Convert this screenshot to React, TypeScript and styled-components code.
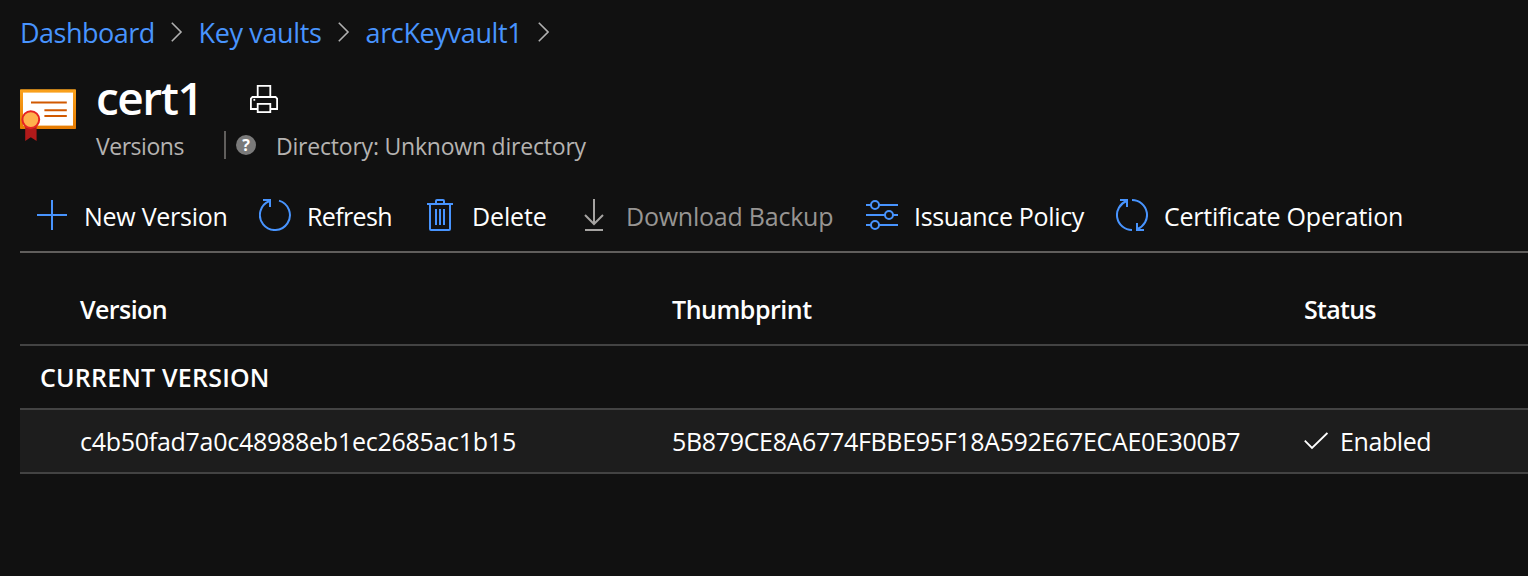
import React from 'react';
import styled, { createGlobalStyle } from 'styled-components';

const GlobalStyle = createGlobalStyle`
  html, body {
    margin: 0;
    background: #111111;
  }
  *, *::before, *::after {
    box-sizing: border-box;
  }
`;

const Page = styled.main`
  display: flex;
  flex-direction: column;
  min-height: 576px;
  padding-left: 20px;
  overflow: hidden;
  background: #111111;
  color: #ffffff;
  font-family: 'Open Sans', 'Noto Sans', sans-serif;
  font-size: 25px;
  line-height: 36px;
  white-space: nowrap;
`;

const Breadcrumb = styled.nav`
  display: flex;
  align-items: center;
  height: 64px;
`;

const Crumb = styled.a<{ $width: number; $tracking: number }>`
  width: ${(p) => p.$width}px;
  padding-top: 2px;
  color: #4894fe;
  font-size: 27px;
  letter-spacing: ${(p) => p.$tracking}px;
  text-decoration: none;
`;

const Chevron = styled.svg`
  flex: none;
  width: 11.5px;
  height: 20px;
  margin-right: 16px;
  fill: none;
  stroke: #b0b0b0;
  stroke-width: 1.6;
`;

const Header = styled.header`
  display: flex;
  height: 116px;
`;

const CertificateIcon = styled.svg`
  flex: none;
  width: 56px;
  height: 53px;
  margin: 25px 20px 0 0;
`;

const HeaderText = styled.div`
  display: flex;
  flex-direction: column;
`;

const TitleRow = styled.div`
  display: flex;
  height: 64px;
  padding-top: 3px;
`;

const Title = styled.h1`
  width: 153px;
  margin: 0;
  font-size: 46px;
  font-weight: 600;
  line-height: 60px;
  letter-spacing: -1.5px;
`;

const PrinterIcon = styled.svg`
  width: 30px;
  height: 30px;
  margin-top: 17px;
  fill: none;
  stroke: #ffffff;
  stroke-width: 1.8;
`;

const SubtitleRow = styled.div`
  display: flex;
  height: 36px;
  color: #b5b3b1;
  font-size: 23px;
`;

const ResourceKind = styled.span`
  width: 128px;
  letter-spacing: -0.47px;
`;

const Divider = styled.span`
  width: 2px;
  height: 28px;
  margin: 3px 10px 0 0;
  background: #605e5c;
`;

const HelpBadge = styled.span`
  width: 20px;
  height: 20px;
  margin: 7px 20px 0 0;
  border-radius: 50%;
  background: #7a7a7a;
  color: #ffffff;
  font-size: 16px;
  font-weight: 700;
  line-height: 20px;
  text-align: center;
`;

const Directory = styled.span`
  letter-spacing: -0.21px;
`;

const Toolbar = styled.div`
  display: flex;
  align-items: flex-start;
  gap: 32px;
  height: 73px;
  padding: 18px 0 0 16px;
  border-bottom: 2px solid #605e5c;
`;

const Command = styled.button<{ $disabled?: boolean }>`
  display: flex;
  flex: none;
  gap: 16px;
  padding: 0;
  border: 0;
  background: none;
  color: ${(p) => (p.$disabled ? '#979593' : '#ffffff')};
  font: inherit;
  text-align: left;
`;

const CommandIcon = styled.svg<{ $disabled?: boolean }>`
  flex: none;
  width: 32px;
  height: 32px;
  margin-top: 1px;
  fill: none;
  stroke: ${(p) => (p.$disabled ? '#a6a4a2' : '#4894fe')};
  stroke-width: 2;
`;

const CommandLabel = styled.span<{ $width: number; $tracking: number }>`
  width: ${(p) => p.$width}px;
  letter-spacing: ${(p) => p.$tracking}px;
`;

const Table = styled.section`
  display: flex;
  flex-direction: column;
`;

const columns = `
  display: grid;
  grid-template-columns: 592px 632px 1fr;
  padding-left: 60px;
`;

const TableHead = styled.div`
  ${columns}
  height: 93px;
  padding-top: 38px;
  border-bottom: 2px solid #434343;
  font-weight: 600;
`;

const GroupRow = styled.div`
  height: 64px;
  padding: 13px 0 0 20px;
  border-bottom: 2px solid #434343;
  font-weight: 600;
  letter-spacing: 0.2px;
`;

const TableRow = styled.div`
  ${columns}
  height: 64px;
  padding-top: 13px;
  border-bottom: 2px solid #434343;
  background: #1d1d1d;
`;

const Cell = styled.span<{ $tracking: number }>`
  display: flex;
  letter-spacing: ${(p) => p.$tracking}px;
`;

const CheckIcon = styled.svg`
  width: 24px;
  height: 18px;
  margin: 9px 12px 0 0;
  fill: none;
  stroke: #ffffff;
  stroke-width: 1.8;
`;

const crumbs = [
  { label: 'Dashboard', width: 151, tracking: -0.5 },
  { label: 'Key vaults', width: 139.5, tracking: -0.35 },
  { label: 'arcKeyvault1', width: 172, tracking: -0.35 },
];

const commands = [
  { label: 'New Version', width: 143, tracking: -0.27, icon: <path d="M16 1V31M1 16H31" /> },
  {
    label: 'Refresh',
    width: 85,
    tracking: -0.63,
    icon: <path d="M20 1.6A15 15 0 1 1 10.6 2M4 1H11V8" />,
  },
  {
    label: 'Delete',
    width: 74,
    tracking: -0.15,
    icon: (
      <path d="M3 5H29M12 5V2Q12 1 13 1H19Q20 1 20 2V5M6 5V30Q6 31 7 31H25Q26 31 26 30V5M12 10V26M16 10V26M20 10V26" />
    ),
  },
  {
    label: 'Download Backup',
    width: 208,
    tracking: -0.23,
    disabled: true,
    icon: <path d="M16 0V25M7 16L16 25L25 16M7 31H25" />,
  },
  {
    label: 'Issuance Policy',
    width: 170,
    tracking: -0.34,
    icon: (
      <>
        <path d="M0 6H5M13 6H32M0 16H19M27 16H32M0 26H5M13 26H32" />
        <circle cx="9" cy="6" r="4" />
        <circle cx="23" cy="16" r="4" />
        <circle cx="9" cy="26" r="4" />
      </>
    ),
  },
  {
    label: 'Certificate Operation',
    width: 240,
    tracking: -0.22,
    icon: (
      <path d="M16 31A15 15 0 0 1 10.6 2M4 1H11V8M16 1A15 15 0 0 1 21.4 30M28 31H21V24" />
    ),
  },
];

export default function App() {
  return (
    <Page>
      <GlobalStyle />
      <Breadcrumb>
        {crumbs.map((c) => (
          <React.Fragment key={c.label}>
            <Crumb $width={c.width} $tracking={c.tracking}>
              {c.label}
            </Crumb>
            <Chevron viewBox="0 0 11.5 20">
              <path d="M0.8 0.8L10 10L0.8 19.2" />
            </Chevron>
          </React.Fragment>
        ))}
      </Breadcrumb>

      <Header>
        <CertificateIcon viewBox="0 0 56 53">
          <defs>
            <linearGradient id="frame" x1="0" y1="0" x2="0" y2="1">
              <stop offset="0" stopColor="#faa21d" />
              <stop offset="1" stopColor="#e57b02" />
            </linearGradient>
          </defs>
          <rect y="0.2" width="56" height="39.8" rx="0.8" fill="url(#frame)" />
          <rect x="3" y="3.6" width="50" height="33" fill="#ffffff" />
          <path d="M11 13.4H46.8M24.4 21.3H46.8M24.4 27H46.8" stroke="#d15900" strokeWidth="2" />
          <path d="M5.2 37H16.6V52L10.8 48.2L5.2 52Z" fill="#b11a1a" />
          <circle cx="10.8" cy="30.6" r="8.4" fill="#ffb04d" stroke="#e62323" strokeWidth="2" />
        </CertificateIcon>
        <HeaderText>
          <TitleRow>
            <Title>cert1</Title>
            <PrinterIcon viewBox="0 0 30 30">
              <path d="M8.7 13V1.9H21.3V13M8.7 25H1.9V14.5L3.4 13H26.6L28.1 14.5V25H21.3" />
              <rect x="8.7" y="19.9" width="12.6" height="8.2" />
              <rect x="4.4" y="14.9" width="1.8" height="1.8" fill="#ffffff" stroke="none" />
            </PrinterIcon>
          </TitleRow>
          <SubtitleRow>
            <ResourceKind>Versions</ResourceKind>
            <Divider />
            <HelpBadge>?</HelpBadge>
            <Directory>Directory: Unknown directory</Directory>
          </SubtitleRow>
        </HeaderText>
      </Header>

      <Toolbar>
        {commands.map((c) => (
          <Command key={c.label} $disabled={c.disabled} disabled={c.disabled}>
            <CommandIcon viewBox="0 0 32 32" $disabled={c.disabled}>
              {c.icon}
            </CommandIcon>
            <CommandLabel $width={c.width} $tracking={c.tracking}>
              {c.label}
            </CommandLabel>
          </Command>
        ))}
      </Toolbar>

      <Table>
        <TableHead>
          <Cell $tracking={-0.57}>Version</Cell>
          <Cell $tracking={-0.47}>Thumbprint</Cell>
          <Cell $tracking={-0.72}>Status</Cell>
        </TableHead>
        <GroupRow>CURRENT VERSION</GroupRow>
        <TableRow>
          <Cell $tracking={-0.27}>c4b50fad7a0c48988eb1ec2685ac1b15</Cell>
          <Cell $tracking={-0.33}>5B879CE8A6774FBBE95F18A592E67ECAE0E300B7</Cell>
          <Cell $tracking={-0.4}>
            <CheckIcon viewBox="0 0 24 18">
              <path d="M0.8 8.6L8 16L23.4 1" />
            </CheckIcon>
            Enabled
          </Cell>
        </TableRow>
      </Table>
    </Page>
  );
}
